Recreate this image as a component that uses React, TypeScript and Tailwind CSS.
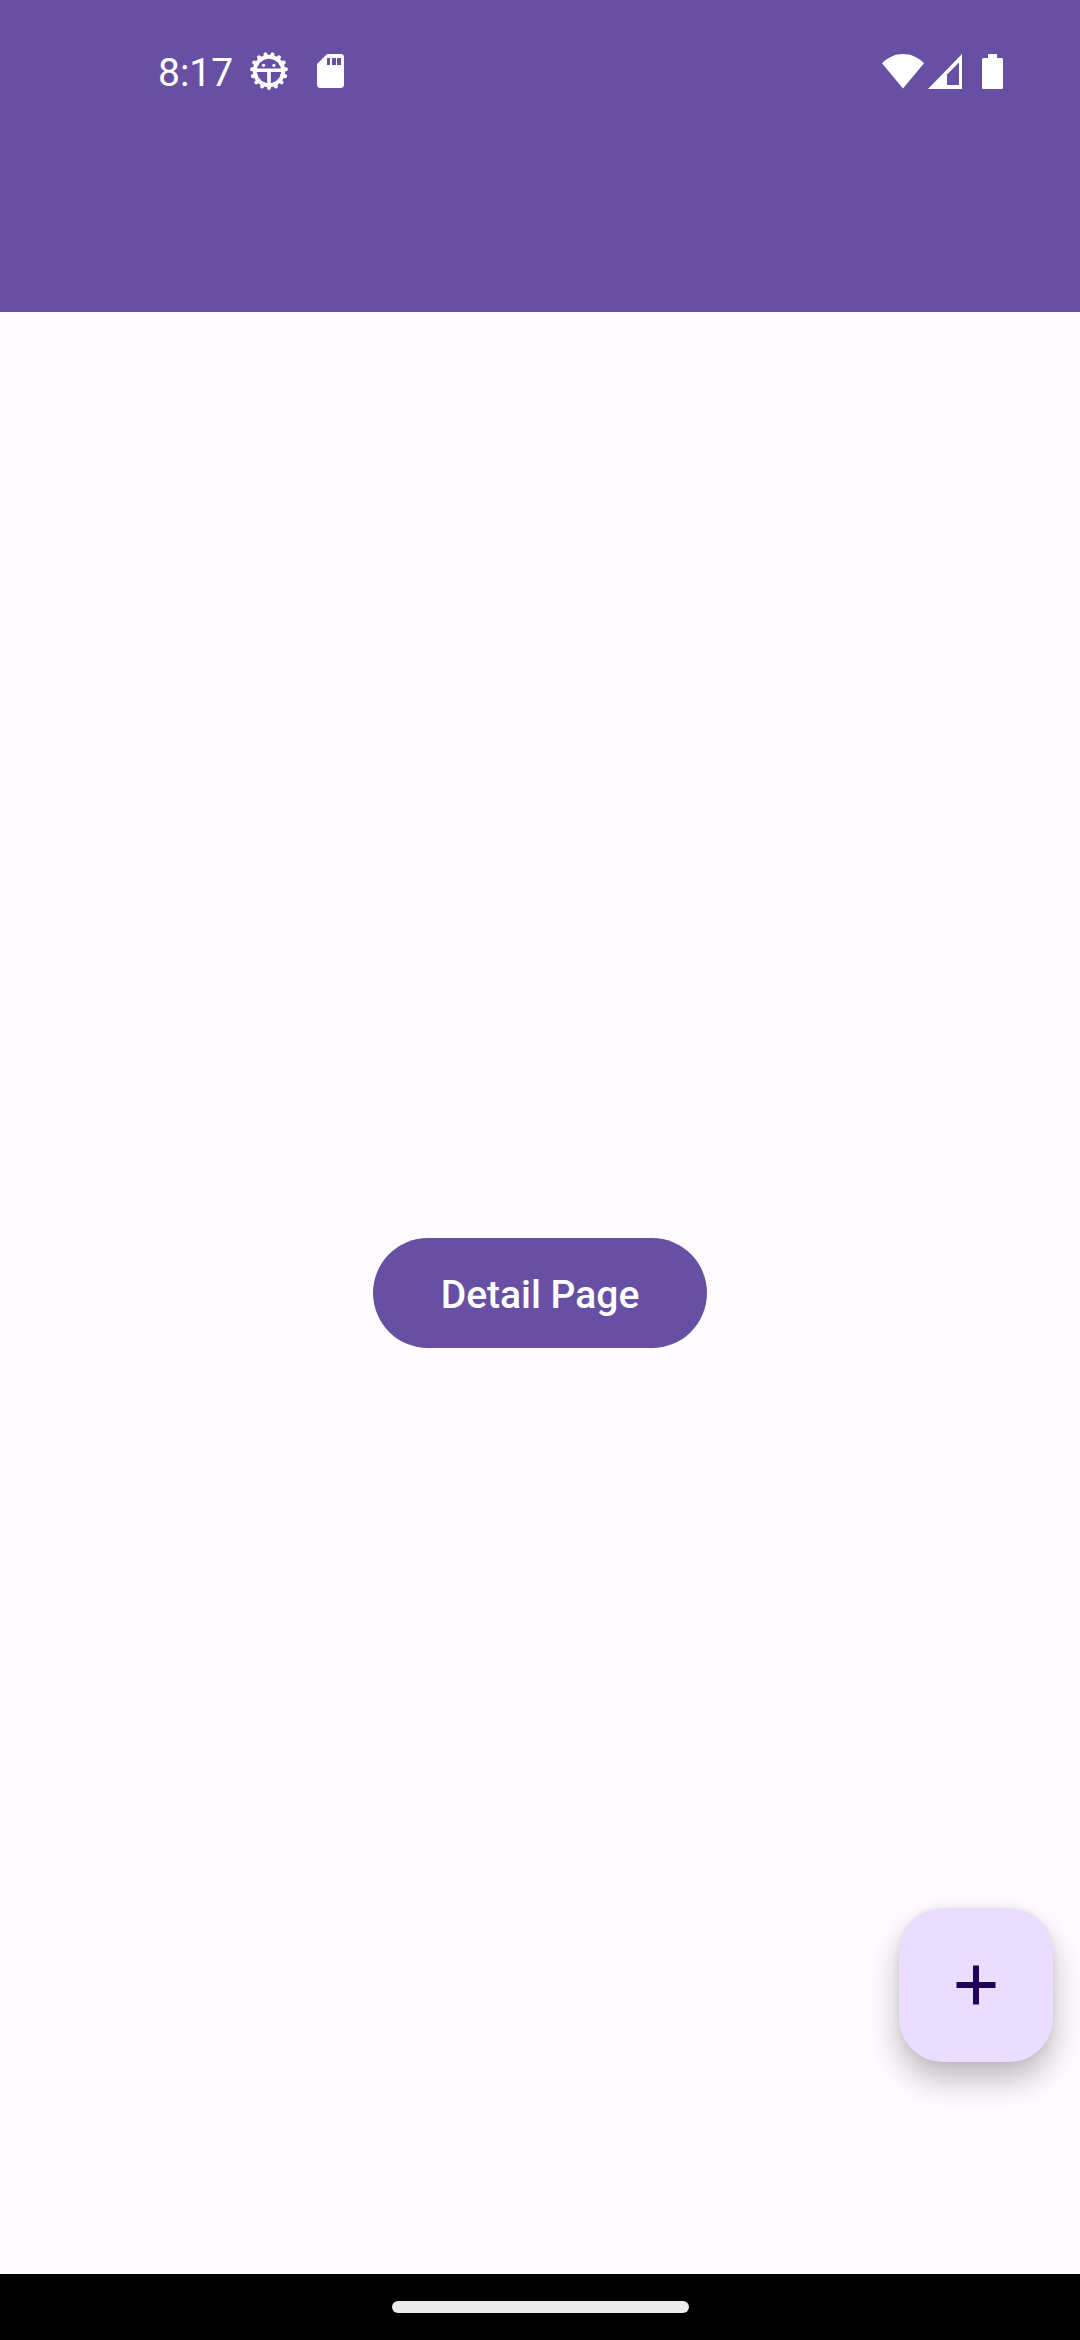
const TEETH = Array.from({ length: 15 }, (_, i) => 12 + i * 24);

function DebugIcon() {
  return (
    <svg viewBox="0 0 40 40" className="h-10 w-10" aria-hidden="true">
      <g stroke="#fff" strokeWidth="4" strokeLinecap="round">
        {TEETH.map((angle) => (
          <line key={angle} x1="20" y1="3" x2="20" y2="6" transform={`rotate(${angle} 20 20)`} />
        ))}
      </g>
      <circle cx="20" cy="20" r="14.2" fill="none" stroke="#fff" strokeWidth="4" />
      <path d="M7 19.200h26M20 19.200v14" stroke="#fff" strokeWidth="3.6" fill="none" />
      <circle cx="14.500" cy="14.300" r="1.6" fill="#fff" />
      <circle cx="24.900" cy="14.300" r="1.6" fill="#fff" />
    </svg>
  );
}

function SdCardIcon() {
  return (
    <svg viewBox="0 0 27 34" className="h-[34px] w-[27px]" aria-hidden="true">
      <path
        fill="#fff"
        fillRule="evenodd"
        d="M10 0h13.600A3.400 3.400 0 0 1 27 3.400v27.200a3.400 3.400 0 0 1-3.400 3.400H3.400A3.400 3.400 0 0 1 0 30.600V10ZM10 4v7h3V4ZM15 4v7h4V4ZM20 4v7h4V4Z"
      />
    </svg>
  );
}

function WifiIcon() {
  return (
    <svg viewBox="0 0 42 35" className="h-[35px] w-[42px]" aria-hidden="true">
      <path fill="#fff" d="M21 34.500 0 9.200C6 3.300 13 0 21 0s15 3.300 21 9.200Z" />
    </svg>
  );
}

function SignalIcon() {
  return (
    <svg viewBox="0 0 34 35" className="h-[35px] w-[34px]" aria-hidden="true">
      <path fill="#fff" fillRule="evenodd" d="M34 0v35H0ZM31 8.500 19 20.500V31h12Z" />
    </svg>
  );
}

function BatteryIcon() {
  return (
    <svg viewBox="0 0 21 35" className="h-[35px] w-[21px]" aria-hidden="true">
      <path
        fill="#fff"
        d="M6 0h9v4h4.500A1.500 1.500 0 0 1 21 5.500v28a1.500 1.500 0 0 1-1.500 1.500h-18A1.500 1.500 0 0 1 0 33.500v-28A1.500 1.500 0 0 1 1.500 4H6Z"
      />
    </svg>
  );
}

export default function App() {
  return (
    <div className="flex min-h-screen flex-col bg-[#fffbff] font-['Roboto',sans-serif]">
      <header className="bg-[#6750a3] pb-[170px] text-white">
        <div className="flex h-[142px] items-center justify-between pr-[77px] pl-[158px]">
          <div className="flex items-center">
            <span className="pt-1 text-[39px] leading-[46px]">8:17</span>
            <div className="ml-4 flex items-center gap-7">
              <DebugIcon />
              <SdCardIcon />
            </div>
          </div>
          <div className="flex items-center">
            <WifiIcon />
            <div className="ml-1 flex items-center gap-5">
              <SignalIcon />
              <BatteryIcon />
            </div>
          </div>
        </div>
      </header>

      <main className="relative flex grow items-center justify-center">
        <button
          type="button"
          className="h-[110px] rounded-full bg-[#6750a3] px-[68px] pt-1 text-[39px] leading-[55px] font-medium text-white"
        >
          Detail Page
        </button>
        <button
          type="button"
          aria-label="Add"
          className="absolute right-[27px] bottom-[212px] flex size-[154px] items-center justify-center rounded-[44px] bg-[#eaddff] shadow-[0_18px_32px_rgba(0,0,0,0.26),0_0_8px_rgba(0,0,0,0.06)]"
        >
          <svg viewBox="0 0 40 40" className="size-10" aria-hidden="true">
            <path d="M.5 20h39M20 .5v39" stroke="#21005d" strokeWidth="6" />
          </svg>
        </button>
      </main>

      <footer className="flex h-[66px] items-center justify-center bg-black">
        <div className="h-3 w-[297px] rounded-full bg-[#ebebeb]" />
      </footer>
    </div>
  );
}
